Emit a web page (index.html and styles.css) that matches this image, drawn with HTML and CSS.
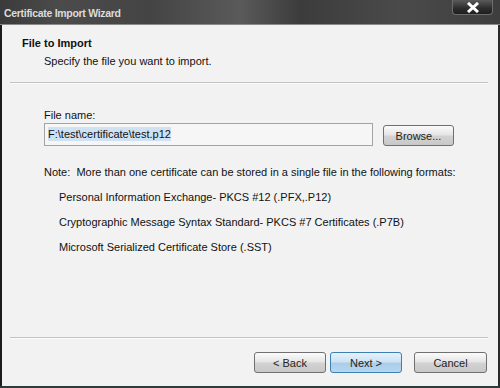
FILE: index.html
```html
<!DOCTYPE html>
<html lang="en">
<head>
    <meta charset="UTF-8">
    <title>Certificate Import Wizard</title>
    <link rel="stylesheet" href="styles.css">
</head>
<body>
    <div class="window">
        <div class="titlebar">
            <span class="title">Certificate Import Wizard</span>
            <button class="close" aria-label="Close">
                <svg width="14" height="11" viewBox="0 0 14 11">
                    <path d="M2 1 L12 10 M12 1 L2 10" stroke="#fff" stroke-width="3" fill="none"/>
                </svg>
            </button>
        </div>

        <div class="header">
            <h1>File to Import</h1>
            <p>Specify the file you want to import.</p>
        </div>
        <div class="sep"></div>

        <div class="content">
            <label for="file">File name:</label>
            <div class="file-row">
                <div class="input" id="file"><span class="sel">F:\test\certificate\test.p12</span></div>
                <button class="btn browse">Browse...</button>
            </div>
            <p class="note">Note:&nbsp;&nbsp;More than one certificate can be stored in a single file in the following formats:</p>
            <ul class="formats">
                <li>Personal Information Exchange- PKCS #12 (.PFX,.P12)</li>
                <li>Cryptographic Message Syntax Standard- PKCS #7 Certificates (.P7B)</li>
                <li>Microsoft Serialized Certificate Store (.SST)</li>
            </ul>
        </div>

        <div class="sep"></div>
        <div class="footer">
            <button class="btn">&lt; Back</button>
            <button class="btn default">Next &gt;</button>
            <button class="btn cancel">Cancel</button>
        </div>
    </div>
</body>
</html>
```

FILE: styles.css
```css
* {
    box-sizing: border-box;
}
body {
    margin: 0;
    font-family: "Liberation Sans", Arial, sans-serif;
    font-size: 11px;
    color: #111;
    background: #2e3b39;
}
.window {
    width: 500px;
    height: 386px;
    display: flex;
    flex-direction: column;
    background: #f2f2f2;
    border-left: 2px solid #1c1c1c;
    border-right: 2px solid #2a2a2a;
}
.titlebar {
    height: 25px;
    flex-shrink: 0;
    display: flex;
    align-items: flex-start;
    justify-content: space-between;
    margin: 0 -2px;
    background: linear-gradient(90deg, #3b3b3b 0%, #4b4b4b 12%, #444 30%, #5a5a5a 48%, #3c3c3c 60%, #4a4a4a 80%, #3e3e3e 100%);
    border-bottom: 1px solid #8a8a8a;
}
.title {
    color: #dcdcdc;
    font-weight: bold;
    font-size: 10.5px;
    letter-spacing: -0.3px;
    padding: 7px 0 0 4px;
}
.close {
    width: 41px;
    height: 15px;
    margin-right: 7px;
    padding: 0;
    display: flex;
    align-items: center;
    justify-content: center;
    background: linear-gradient(#5a5a5a, #2c2c2c 60%, #1f1f1f);
    border: 1px solid #6c6c6c;
    border-top: none;
    border-radius: 0 0 4px 4px;
}
.header {
    height: 57px;
    flex-shrink: 0;
    padding: 12px 0 0 20px;
}
.header h1 {
    font-size: 11px;
    font-weight: bold;
    margin: 0;
}
.header p {
    margin: 6px 0 0 22px;
}
.sep {
    height: 2px;
    flex-shrink: 0;
    margin: 0 10px 0 8px;
    background: #c3c3c3;
    border-bottom: 1px solid #fbfbfb;
}
.content {
    flex: 1;
    padding: 25px 0 0 42px;
}
label {
    display: block;
}
.file-row {
    display: flex;
    align-items: center;
    gap: 10px;
    margin-top: 1px;
}
.input {
    width: 329px;
    height: 23px;
    border: 1px solid #a3a3a3;
    background: #f6f6f6;
    display: flex;
    align-items: center;
    padding-left: 3px;
}
.sel {
    background: #cfe2f3;
    padding: 1px 0;
}
.btn {
    font-family: "Liberation Sans", Arial, sans-serif;
    font-size: 11px;
    color: #222;
    width: 72px;
    height: 21px;
    padding: 0;
    border: 1px solid #707070;
    border-radius: 3px;
    background: linear-gradient(#fbfbfb, #e6e6e6 45%, #d2d2d2 55%, #c8c8c8);
}
.browse {
    width: 71px;
    margin-top: 3px;
}
.note {
    margin: 20px 0 0;
}
.formats {
    list-style: none;
    margin: 0;
    padding: 0 0 0 15px;
}
.formats li {
    margin-top: 13px;
}
.footer {
    height: 47px;
    flex-shrink: 0;
    display: flex;
    align-items: flex-start;
    padding: 13px 0 0 252px;
    gap: 4px;
}
.btn.default {
    background: linear-gradient(#e6f1fa, #cde3f4 45%, #a9cdea 55%, #b8d7ef);
    border-color: #3c7fb1;
}
.btn.cancel {
    margin-left: 8px;
    width: 73px;
}
```
